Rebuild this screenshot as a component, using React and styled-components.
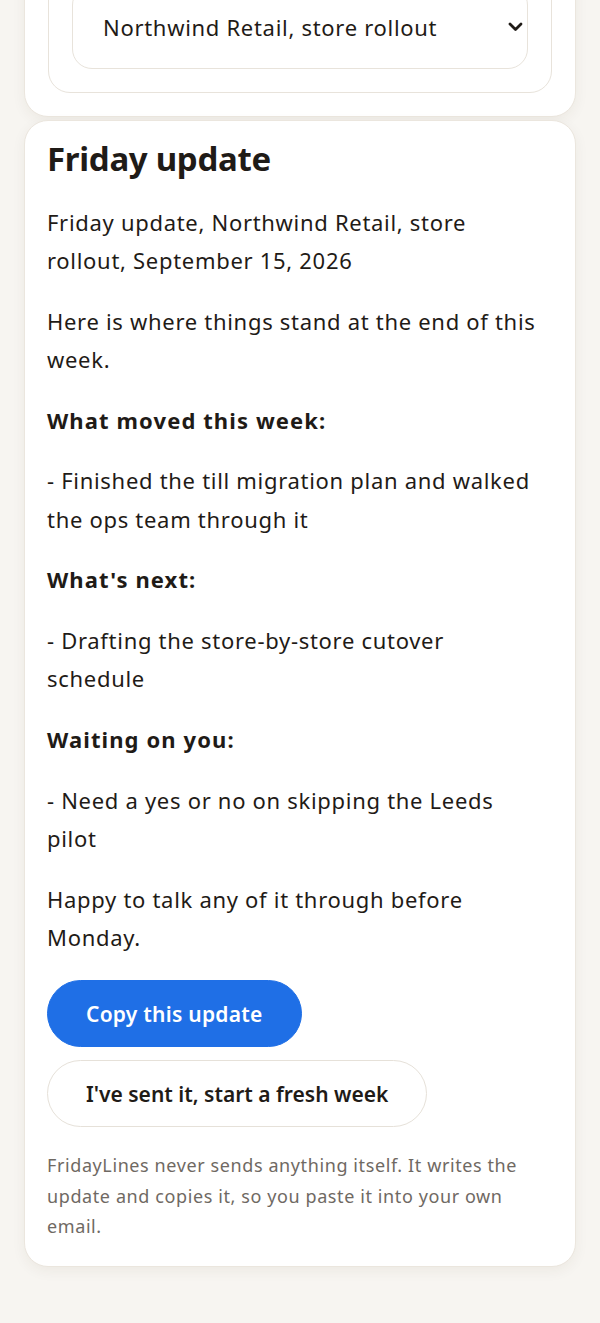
import React from 'react'
import styled, { createGlobalStyle } from 'styled-components'

const GlobalStyle = createGlobalStyle`
  html, body {
    margin: 0;
    padding: 0;
    background: #f7f5f1;
  }
  body {
    font-family: 'Noto Sans', 'Open Sans', sans-serif;
    color: #1f1b17;
  }
`

const Page = styled.div`
  padding: 0 24px 60px;
  margin-top: -63px;
  display: flex;
  flex-direction: column;
  gap: 3px;
`

const Card = styled.section`
  background: #fff;
  border: 1px solid #ebe6de;
  border-radius: 24px;
  box-shadow: 0 4px 14px rgba(60, 45, 25, 0.06);
  padding: ${p => p.$pad || '22px'};
`

const FieldBox = styled.div`
  border: 1px solid #e8e3db;
  border-radius: 22px;
  padding: 23px;
`

const SelectWrap = styled.div`
  position: relative;
`

const Select = styled.select`
  appearance: none;
  width: 100%;
  height: 84px;
  border: 1px solid #e8e3db;
  border-radius: 20px;
  background: #fff;
  padding: 0 30px;
  font-family: inherit;
  font-size: 22px;
  letter-spacing: 0.7px;
  color: #1f1b17;
`

const Chevron = styled.svg`
  position: absolute;
  right: 5px;
  top: 50%;
  transform: translateY(-50%);
  pointer-events: none;
`

const Title = styled.h2`
  margin: -1px 0 24px;
  font-size: 33px;
  font-weight: 700;
  line-height: 1.2;
  letter-spacing: -0.3px;
`

const Body = styled.div`
  display: flex;
  flex-direction: column;
  gap: 22.4px;
  padding-right: 12px;
`

const Para = styled.p`
  margin: 0;
  font-size: 22px;
  line-height: 38.3px;
  font-weight: ${p => (p.$bold ? 700 : 400)};
  letter-spacing: ${p => (p.$bold ? '1.1px' : '0.7px')};
`

const Actions = styled.div`
  display: flex;
  flex-direction: column;
  align-items: flex-start;
  gap: 13px;
  margin-top: 24px;
`

const Button = styled.button`
  height: 67px;
  padding: 0 38px;
  border-radius: 34px;
  font-family: inherit;
  font-size: 21px;
  font-weight: 600;
  letter-spacing: ${p => (p.$primary ? '0.25px' : '0')};
  cursor: pointer;
  border: 1px solid ${p => (p.$primary ? '#1f6fe6' : '#e6e1d9')};
  background: ${p => (p.$primary ? '#1f6fe6' : '#fff')};
  color: ${p => (p.$primary ? '#fff' : '#1f1b17')};
`

const Note = styled.p`
  margin: 23px 0 0;
  font-size: 18px;
  line-height: 30.5px;
  letter-spacing: 0.6px;
  color: #6f6963;
`

const sections = [
  { text: 'Friday update, Northwind Retail, store rollout, September 15, 2026' },
  { text: 'Here is where things stand at the end of this week.' },
  { text: 'What moved this week:', bold: true },
  { text: '- Finished the till migration plan and walked the ops team through it' },
  { text: "What's next:", bold: true },
  { text: '- Drafting the store-by-store cutover schedule' },
  { text: 'Waiting on you:', bold: true },
  { text: '- Need a yes or no on skipping the Leeds pilot' },
  { text: 'Happy to talk any of it through before Monday.' },
]

export default function App() {
  return (
    <>
      <GlobalStyle />
      <Page>
        <Card $pad="23px">
          <FieldBox>
            <SelectWrap>
              <Select defaultValue="northwind">
                <option value="northwind">Northwind Retail, store rollout</option>
              </Select>
              <Chevron width="15" height="10" viewBox="0 0 15 10">
                <path d="M2 2l5.5 5.5L13 2" fill="none" stroke="#1f1b17" strokeWidth="2.8" strokeLinecap="round" strokeLinejoin="round" />
              </Chevron>
            </SelectWrap>
          </FieldBox>
        </Card>
        <Card $pad="19px 22px 24px">
          <Title>Friday update</Title>
          <Body>
            {sections.map((s, i) => (
              <Para key={i} $bold={s.bold}>{s.text}</Para>
            ))}
          </Body>
          <Actions>
            <Button $primary>Copy this update</Button>
            <Button>I've sent it, start a fresh week</Button>
          </Actions>
          <Note>
            FridayLines never sends anything itself. It writes the update and copies it, so you paste it into your own email.
          </Note>
        </Card>
      </Page>
    </>
  )
}
